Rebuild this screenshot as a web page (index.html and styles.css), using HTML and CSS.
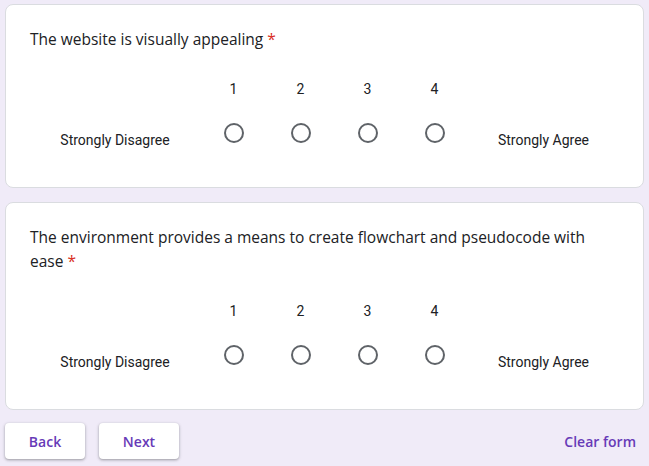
FILE: index.html
```html
<!DOCTYPE html>
<html>
<head>
<meta charset="utf-8">
<link rel="stylesheet" href="styles.css">
</head>
<body>
<div class="page">
  <div class="card">
    <div class="title">The website is visually appealing <span class="req">*</span></div>
    <div class="scale">
      <div></div>
      <div class="num">1</div><div class="num">2</div><div class="num">3</div><div class="num">4</div>
      <div></div>
      <div class="side">Strongly Disagree</div>
      <div class="cell"><span class="radio"></span></div>
      <div class="cell"><span class="radio"></span></div>
      <div class="cell"><span class="radio"></span></div>
      <div class="cell"><span class="radio"></span></div>
      <div class="side">Strongly Agree</div>
    </div>
  </div>
  <div class="card">
    <div class="title">The environment provides a means to create flowchart and pseudocode with ease <span class="req">*</span></div>
    <div class="scale">
      <div></div>
      <div class="num">1</div><div class="num">2</div><div class="num">3</div><div class="num">4</div>
      <div></div>
      <div class="side">Strongly Disagree</div>
      <div class="cell"><span class="radio"></span></div>
      <div class="cell"><span class="radio"></span></div>
      <div class="cell"><span class="radio"></span></div>
      <div class="cell"><span class="radio"></span></div>
      <div class="side">Strongly Agree</div>
    </div>
  </div>
  <div class="actions">
    <div class="nav">
      <button class="btn">Back</button>
      <button class="btn">Next</button>
    </div>
    <button class="clear">Clear form</button>
  </div>
</div>
</body>
</html>
```

FILE: styles.css
```css
html, body {
  margin: 0;
  padding: 0;
  background: #f0ebf8;
}
.page {
  padding: 4px 5px;
  display: flex;
  flex-direction: column;
  gap: 14px;
}
.card {
  background: #fff;
  border: 1px solid #dadce0;
  border-radius: 8px;
  padding: 22px 24px 26px 24px;
}
.title {
  font-family: "Open Sans", sans-serif;
  font-size: 15.5px;
  line-height: 24px;
  color: #202124;
}
.req {
  color: #d93025;
}
.scale {
  display: grid;
  grid-template-columns: 170px 67px 67px 67px 67px 1fr;
  grid-template-rows: 20px auto;
  margin-top: 28px;
  margin-bottom: 11px;
  font-family: Roboto, sans-serif;
  font-size: 14px;
  color: #202124;
}
.num {
  text-align: center;
  line-height: 20px;
}
.side {
  text-align: center;
  line-height: 20px;
  padding-top: 31px;
}
.cell {
  display: flex;
  justify-content: center;
  padding-top: 24px;
}
.radio {
  width: 16px;
  height: 16px;
  border: 2px solid #5f6368;
  border-radius: 50%;
}
.actions {
  display: flex;
  justify-content: space-between;
  align-items: center;
  margin-top: -1px;
}
.nav {
  display: flex;
  gap: 14px;
}
.btn {
  width: 80px;
  height: 36px;
  background: #fff;
  border: none;
  border-radius: 4px;
  box-shadow: 0 1px 2px rgba(60,64,67,0.3), 0 1px 3px 1px rgba(60,64,67,0.15);
  font-family: "Open Sans", sans-serif;
  font-weight: 600;
  font-size: 14px;
  color: #673ab7;
  padding: 0;
}
.clear {
  background: none;
  border: none;
  font-family: "Open Sans", sans-serif;
  font-weight: 600;
  font-size: 14px;
  color: #673ab7;
  padding: 8px 8px;
}
```
